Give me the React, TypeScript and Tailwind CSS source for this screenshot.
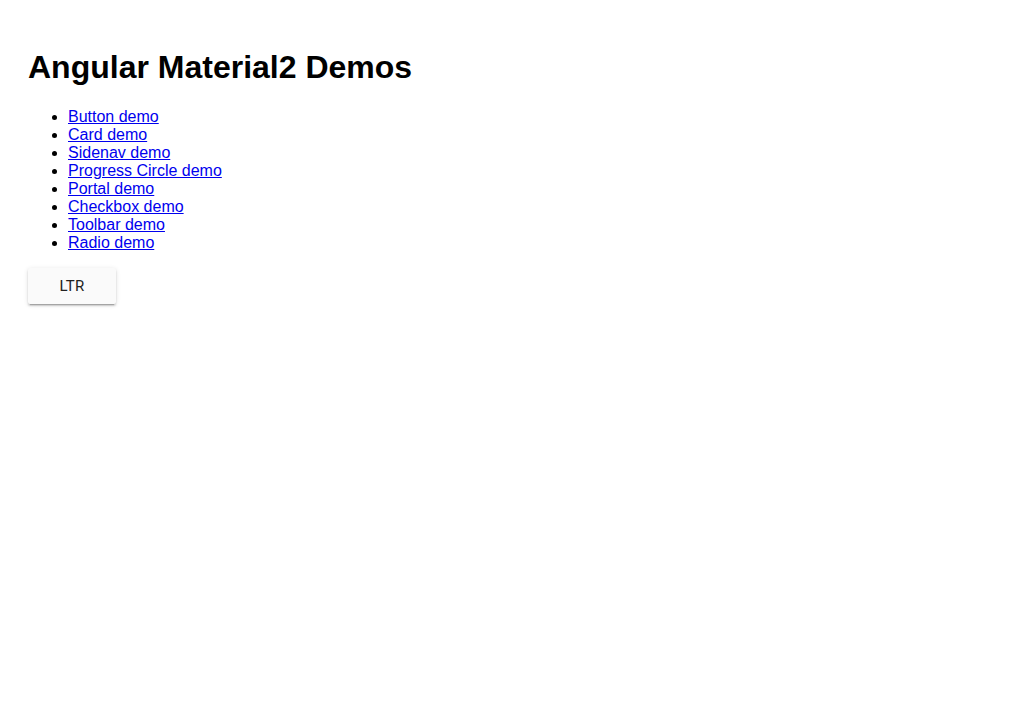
const demos = [
  "Button demo",
  "Card demo",
  "Sidenav demo",
  "Progress Circle demo",
  "Portal demo",
  "Checkbox demo",
  "Toolbar demo",
  "Radio demo",
];

export default function App() {
  return (
    <div className="min-h-screen bg-white p-[28px] text-black font-['Liberation_Sans',Arial,sans-serif]">
      <h1 className="mt-[21px] mb-[22px] text-[32px] font-bold leading-[37px]">
        Angular Material2 Demos
      </h1>
      <ul className="list-disc pl-10 text-base leading-[18px]">
        {demos.map((demo, index) => (
          <li key={index}>
            <a href="#" className="text-[#0000ee] underline">
              {demo}
            </a>
          </li>
        ))}
      </ul>
      <button className="mt-[16px] h-9 min-w-[88px] rounded-[2px] bg-[#fafafa] px-4 font-[Roboto] text-[15px] font-normal tracking-[0.3px] text-[#212121] shadow-[0_2px_2px_0_rgba(0,0,0,0.14),0_3px_1px_-2px_rgba(0,0,0,0.2),0_1px_5px_0_rgba(0,0,0,0.12)]">
        LTR
      </button>
    </div>
  );
}
